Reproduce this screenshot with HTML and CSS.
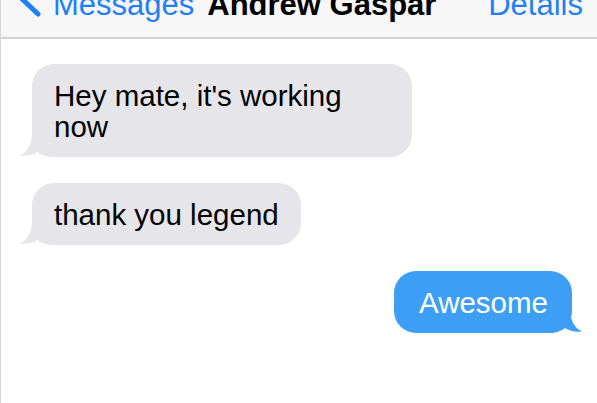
FILE: index.html
```html
<!DOCTYPE html>
<html lang="en">
<head>
    <meta charset="UTF-8">
    <meta name="viewport" content="width=device-width, initial-scale=1.0">
    <title>Andrew Gaspar</title>
    <link rel="stylesheet" href="styles.css">
</head>
<body>
    <div class="screen">
        <header class="topbar">
            <div class="nav">
                <a class="back" href="#">
                    <svg class="chevron" width="24" height="31" viewBox="0 0 24 31">
                        <path d="M21 -9 L3 8 L21 25" fill="none" stroke="currentColor" stroke-width="5" stroke-linecap="round" stroke-linejoin="round"/>
                    </svg>
                    <span>Messages</span>
                </a>
                <span class="title">Andrew Gaspar</span>
                <a class="details" href="#">Details</a>
            </div>
        </header>

        <main class="thread">
            <div class="msg in">
                <p class="bubble">Hey mate, it's working now
                    <svg class="tail" width="30" height="26" viewBox="0 0 30 26"><path d="M12 0 C12 12 9 20 0 24.5 C7 25.5 13 23.5 17 21 C20 23.5 25 25.5 30 26 L30 0 Z"/></svg>
                </p>
            </div>
            <div class="msg in">
                <p class="bubble">thank you legend
                    <svg class="tail" width="30" height="26" viewBox="0 0 30 26"><path d="M12 0 C12 12 9 20 0 24.5 C7 25.5 13 23.5 17 21 C20 23.5 25 25.5 30 26 L30 0 Z"/></svg>
                </p>
            </div>
            <div class="msg out">
                <p class="bubble">Awesome
                    <svg class="tail" width="30" height="26" viewBox="0 0 30 26"><path d="M12 0 C12 12 9 20 0 24.5 C7 25.5 13 23.5 17 21 C20 23.5 25 25.5 30 26 L30 0 Z"/></svg>
                </p>
            </div>
        </main>
    </div>
</body>
</html>
```

FILE: styles.css
```css
body {
    margin: 0;
    background-color: white;
    font-family: "Liberation Sans", Arial, sans-serif;
}
.screen {
    height: 403px;
    border-left: 1px solid #d6d6d9;
    overflow: hidden;
}

/* barra de arriba */
.topbar {
    height: 37px;
    background-color: #f7f7f8;
    border-bottom: 2px solid #d3d3d7;
    overflow: hidden;
}
.nav {
    display: flex;
    align-items: flex-start;
    margin-top: -11px;
    padding: 0 14px 0 16px;
    font-size: 31px;
    line-height: 31px;
}
.nav a {
    color: #1e7ff6;
    text-decoration: none;
}
.back {
    display: flex;
    align-items: flex-start;
    gap: 12px;
}
.chevron {
    overflow: visible;
}
.title {
    margin-left: 13px;
    font-weight: bold;
    color: black;
}
.details {
    margin-left: auto;
}

/* mensajes */
.thread {
    display: flex;
    flex-direction: column;
    gap: 26px;
    padding: 25px 25px 0 31px;
}
.msg {
    display: flex;
}
.msg.out {
    justify-content: flex-end;
}
.bubble {
    position: relative;
    box-sizing: border-box;
    max-width: 380px;
    margin: 0;
    padding: 16px 22px 15px;
    border-radius: 22px;
    font-size: 29.5px;
    line-height: 31px;
}
.in .bubble {
    background-color: #e5e5ea;
    color: black;
}
.out .bubble {
    padding: 16px 24px 15px 25px;
    background-color: #3c9ff5;
    color: white;
}
.tail {
    position: absolute;
    bottom: 0;
}
.in .tail {
    left: -12px;
    fill: #e5e5ea;
}
.out .tail {
    right: -10px;
    fill: #3c9ff5;
    transform: scaleX(-1);
}
```
